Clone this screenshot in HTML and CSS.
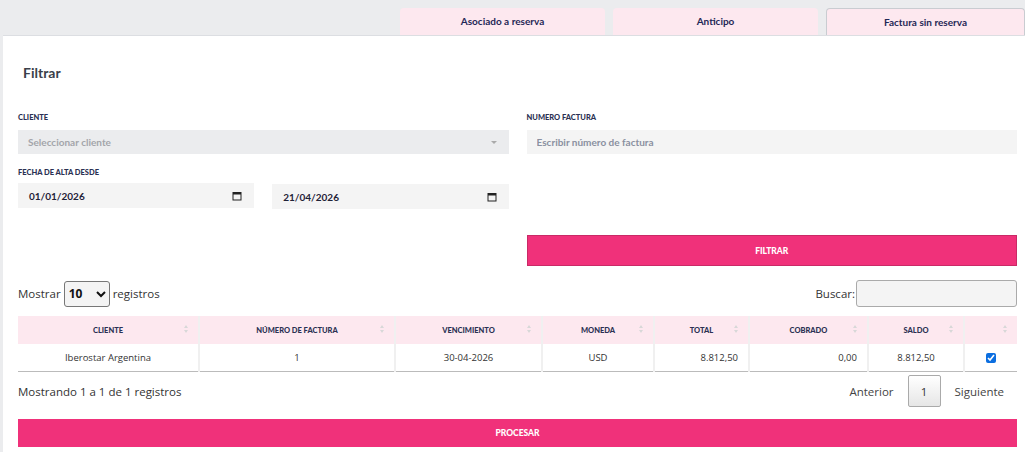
FILE: index.html
```html
<!DOCTYPE html>
<html lang="es">
<head>
    <meta charset="UTF-8">
    <meta name="viewport" content="width=device-width, initial-scale=1.0">
    <title>Cobros</title>
    <link rel="stylesheet" href="styles.css">
</head>
<body>
    <div class="tabs">
        <div class="tab">Asociado a reserva</div>
        <div class="tab">Anticipo</div>
        <div class="tab active">Factura sin reserva</div>
    </div>

    <div class="panel">
        <h2 class="title">Filtrar</h2>

        <div class="filters">
            <div class="field">
                <label>CLIENTE</label>
                <div class="fake-select">
                    <span>Seleccionar cliente</span>
                    <span class="caret"></span>
                </div>
            </div>
            <div class="field">
                <label>NUMERO FACTURA</label>
                <input type="text" class="text-input" placeholder="Escribir número de factura">
            </div>

            <div class="field">
                <label>FECHA DE ALTA DESDE</label>
                <div class="dates">
                    <div class="date-input">
                        <span>01/01/2026</span>
                        <svg width="10" height="10" viewBox="0 0 10 10"><rect x="1" y="1.5" width="8" height="7.5" fill="none" stroke="#222" stroke-width="1"/><rect x="1" y="1.5" width="8" height="2" fill="#222"/></svg>
                    </div>
                    <div class="date-input second">
                        <span>21/04/2026</span>
                        <svg width="10" height="10" viewBox="0 0 10 10"><rect x="1" y="1.5" width="8" height="7.5" fill="none" stroke="#222" stroke-width="1"/><rect x="1" y="1.5" width="8" height="2" fill="#222"/></svg>
                    </div>
                </div>
            </div>
            <div></div>

            <div></div>
            <button class="btn btn-filter">FILTRAR</button>
        </div>

        <div class="table-top">
            <div class="length">
                Mostrar
                <select class="length-select">
                    <option>10</option>
                    <option>25</option>
                    <option>50</option>
                </select>
                registros
            </div>
            <div class="search">
                Buscar:<input type="text" class="search-input">
            </div>
        </div>

        <table class="grid">
            <colgroup>
                <col class="c-cliente">
                <col class="c-numero">
                <col class="c-venc">
                <col class="c-moneda">
                <col class="c-total">
                <col class="c-cobrado">
                <col class="c-saldo">
                <col>
            </colgroup>
            <thead>
                <tr>
                    <th>CLIENTE</th>
                    <th>NÚMERO DE FACTURA</th>
                    <th>VENCIMIENTO</th>
                    <th>MONEDA</th>
                    <th>TOTAL</th>
                    <th>COBRADO</th>
                    <th>SALDO</th>
                    <th></th>
                </tr>
            </thead>
            <tbody>
                <tr>
                    <td>Iberostar Argentina</td>
                    <td>1</td>
                    <td>30-04-2026</td>
                    <td>USD</td>
                    <td class="num">8.812,50</td>
                    <td class="num">0,00</td>
                    <td>8.812,50</td>
                    <td><input type="checkbox" class="check" checked></td>
                </tr>
            </tbody>
        </table>

        <div class="table-bottom">
            <div class="info">Mostrando 1 a 1 de 1 registros</div>
            <div class="pager">
                <span class="pager-link">Anterior</span>
                <span class="pager-current">1</span>
                <span class="pager-link">Siguiente</span>
            </div>
        </div>

        <button class="btn btn-process">PROCESAR</button>
    </div>
</body>
</html>
```

FILE: styles.css
```css
body {
    font-family: Lato, "Open Sans", Arial, sans-serif;
    background-color: #ebecee;
    margin: 0;
    color: #333;
}
.tabs {
    display: flex;
    justify-content: flex-end;
    padding-top: 8px;
    gap: 8px;
}
.tab {
    width: 205px;
    height: 27px;
    line-height: 27px;
    text-align: center;
    background: #fde8ef;
    border-radius: 4px 4px 0 0;
    font-size: 10px;
    font-weight: 700;
    color: #1f2756;
    box-sizing: border-box;
}
.tab.active {
    width: 199px;
    border: 1px solid #c9ccd1;
    border-bottom: none;
    line-height: 26px;
}
.panel {
    margin-left: 3px;
    background: white;
    border-top: 1px solid #dcdee2;
    padding: 27px 8px 5px 15px;
    height: 417px;
    box-sizing: border-box;
}
.title {
    margin: 0 0 0 5px;
    font-size: 14px;
    font-weight: 700;
    line-height: 20px;
    color: #3a3f4a;
}
.filters {
    display: grid;
    grid-template-columns: 1fr 1fr;
    column-gap: 18px;
    margin-top: 27px;
}
.field label {
    display: block;
    font-size: 7.5px;
    font-weight: 900;
    color: #2b3153;
    line-height: 12px;
    margin-top: 2px;
    margin-bottom: 6px;
}
.fake-select {
    display: flex;
    justify-content: space-between;
    align-items: center;
    height: 24px;
    background: #ebecee;
    padding: 0 12px 0 10px;
    font-size: 10px;
    font-weight: 700;
    color: #a3a5aa;
    margin-bottom: 11px;
}
.caret {
    width: 0;
    height: 0;
    border-left: 3px solid transparent;
    border-right: 3px solid transparent;
    border-top: 3px solid #aaa;
}
.text-input {
    display: block;
    width: 100%;
    height: 24px;
    box-sizing: border-box;
    border: none;
    background: #f4f4f4;
    padding: 0 10px;
    font-family: inherit;
    font-size: 10px;
    font-weight: 700;
}
.text-input::placeholder {
    color: #8a90a0;
}
.dates {
    display: flex;
    gap: 18px;
    align-items: flex-start;
    margin-top: -2px;
}
.date-input {
    flex: 1;
    height: 25px;
    display: flex;
    justify-content: space-between;
    align-items: center;
    background: #f4f4f4;
    padding: 0 12px 0 11px;
    font-size: 10px;
    font-weight: 700;
    color: #1f2237;
}
.date-input.second {
    margin-top: 1px;
}
.btn {
    display: block;
    width: 100%;
    border: 1px solid #c92a66;
    background: #f0317a;
    color: white;
    font-family: inherit;
    font-size: 8.5px;
    font-weight: 900;
    cursor: pointer;
}
.btn-filter {
    height: 31px;
    margin-top: 26px;
}
.table-top {
    display: flex;
    justify-content: space-between;
    align-items: center;
    margin-top: 14px;
    font-family: "Open Sans", Arial, sans-serif;
    font-size: 11.5px;
    color: #333;
}
.length {
    display: flex;
    align-items: center;
    gap: 3px;
}
.length-select {
    width: 46px;
    height: 26px;
    font-family: inherit;
    font-size: 12px;
    font-weight: 700;
    border: 1px solid #777;
    border-radius: 3px;
    background: #f4f4f4;
    color: #111;
}
.search {
    display: flex;
    align-items: center;
}
.search-input {
    width: 161px;
    height: 27px;
    box-sizing: border-box;
    border: 1px solid #aaa;
    border-radius: 3px;
    background: #f4f4f4;
    margin-left: 1px;
}
.grid {
    width: 100%;
    border-collapse: collapse;
    margin-top: 9px;
    border-bottom: 1px solid #bbb;
    table-layout: fixed;
}
.c-cliente { width: 181px; }
.c-numero { width: 196px; }
.c-venc { width: 147px; }
.c-moneda { width: 112px; }
.c-total { width: 95px; }
.c-cobrado { width: 119px; }
.c-saldo { width: 96px; }
.grid th {
    position: relative;
    background: #fde8ef;
    height: 27px;
    padding: 1px 8px 0;
    font-size: 7.5px;
    font-weight: 900;
    color: #2b3153;
    border: 2px solid #f0f0f0;
    border-top: none;
    border-bottom: none;
}
.grid th:first-child,
.grid td:first-child {
    border-left: none;
}
.grid th:last-child,
.grid td:last-child {
    border-right: none;
}
.grid th::before,
.grid th::after {
    content: "";
    position: absolute;
    right: 10px;
    border-left: 2.5px solid transparent;
    border-right: 2.5px solid transparent;
}
.grid th::before {
    top: 9px;
    border-bottom: 3px solid #d8d8d8;
}
.grid th::after {
    top: 14px;
    border-top: 3px solid #d8d8d8;
}
.grid td {
    height: 27px;
    padding: 0 10px;
    text-align: center;
    font-family: "Open Sans", Arial, sans-serif;
    font-size: 9.5px;
    color: #333;
    border: 2px solid #f0f0f0;
    border-top: none;
    border-bottom: none;
}
.grid td.num {
    text-align: right;
}
.check {
    width: 10px;
    height: 10px;
    margin: 0;
    accent-color: #0b6ee0;
    vertical-align: middle;
}
.table-bottom {
    display: flex;
    justify-content: space-between;
    align-items: center;
    margin-top: 3px;
    font-family: "Open Sans", Arial, sans-serif;
    font-size: 11.5px;
}
.info {
    color: #333;
}
.pager {
    display: flex;
    align-items: center;
    margin-right: 13px;
}
.pager-link {
    color: #444;
}
.pager-current {
    width: 33px;
    height: 32px;
    box-sizing: border-box;
    border: 1px solid #aaa;
    border-radius: 2px;
    background: linear-gradient(#fff, #e6e6e6);
    display: flex;
    justify-content: center;
    align-items: center;
    margin: 0 14px;
    color: #333;
}
.btn-process {
    height: 28px;
    margin-top: 12px;
    border: none;
}
```
